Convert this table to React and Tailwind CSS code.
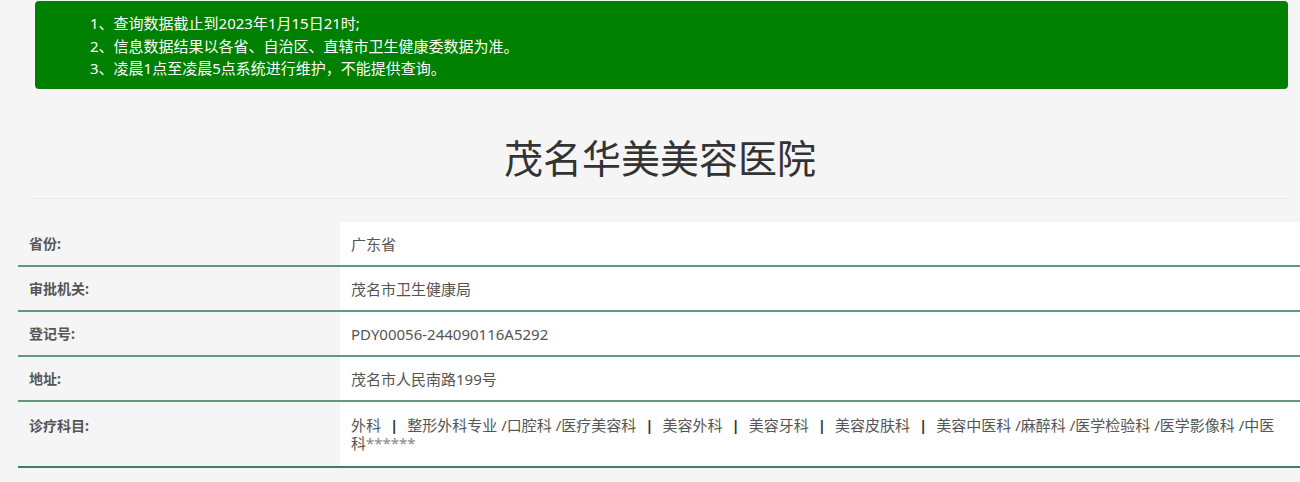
import React from "react";

const notices = [
  "1、查询数据截止到2023年1月15日21时;",
  "2、信息数据结果以各省、自治区、直辖市卫生健康委数据为准。",
  "3、凌晨1点至凌晨5点系统进行维护，不能提供查询。",
];

const rows = [
  { label: "省份:", value: "广东省" },
  { label: "审批机关:", value: "茂名市卫生健康局" },
  { label: "登记号:", value: "PDY00056-244090116A5292" },
  { label: "地址:", value: "茂名市人民南路199号" },
];

const Pipe = () => (
  <span className="mx-[9px] font-bold text-[#333]">|</span>
);

const App = () => {
  return (
    <div className="min-h-[482px] bg-[#f5f5f5] text-[#555] font-['Noto_Sans','Noto_Sans_CJK_SC',sans-serif] overflow-hidden">
      {/* notice */}
      <div className="pl-[35px] pr-[12px] pt-px">
        <div className="h-[88px] rounded-[4px] bg-[#008000] pl-[55px] pt-[11px] text-[15px] leading-[22.5px] text-white">
          {notices.map((n) => (
            <div key={n}>{n}</div>
          ))}
        </div>
      </div>

      {/* title */}
      <div className="ml-[32px] mr-[12px] mt-[42px] border-b border-[#e9e9e9] pb-[13px] text-center">
        <h1 className="text-[39px] leading-[54px] font-normal text-[#333]">
          茂名华美美容医院
        </h1>
      </div>

      {/* info table */}
      <div className="ml-[18px] mt-[23px]">
        {rows.map((r) => (
          <div key={r.label} className="flex border-b-2 border-[#5e9a7b]">
            <div className="w-[322px] shrink-0 pt-[13px] pb-[12px] pl-[11px] text-[14px] leading-[18px] font-bold">
              {r.label}
            </div>
            <div className="flex-1 bg-white pt-[13px] pb-[12px] px-[11px] text-[15px] leading-[18px]">
              {r.value}
            </div>
          </div>
        ))}
        <div className="flex border-b-2 border-[#3f8060]">
          <div className="w-[322px] shrink-0 pt-[15px] pb-[13px] pl-[11px] text-[14px] leading-[18px] font-bold">
            诊疗科目:
          </div>
          <div className="flex-1 bg-white pt-[14px] pb-[14px] px-[11px] text-[15px] leading-[18px]">
            <span className="whitespace-nowrap">
              外科<Pipe />整形外科专业 /口腔科 /医疗美容科<Pipe />美容外科<Pipe />美容牙科<Pipe />美容皮肤科<Pipe />美容中医科 /麻醉科 /医学检验科 /医学影像科 /中医
            </span>
            <br />
            科<span className="text-[#888]">******</span>
          </div>
        </div>
      </div>
    </div>
  );
};

export default App;
